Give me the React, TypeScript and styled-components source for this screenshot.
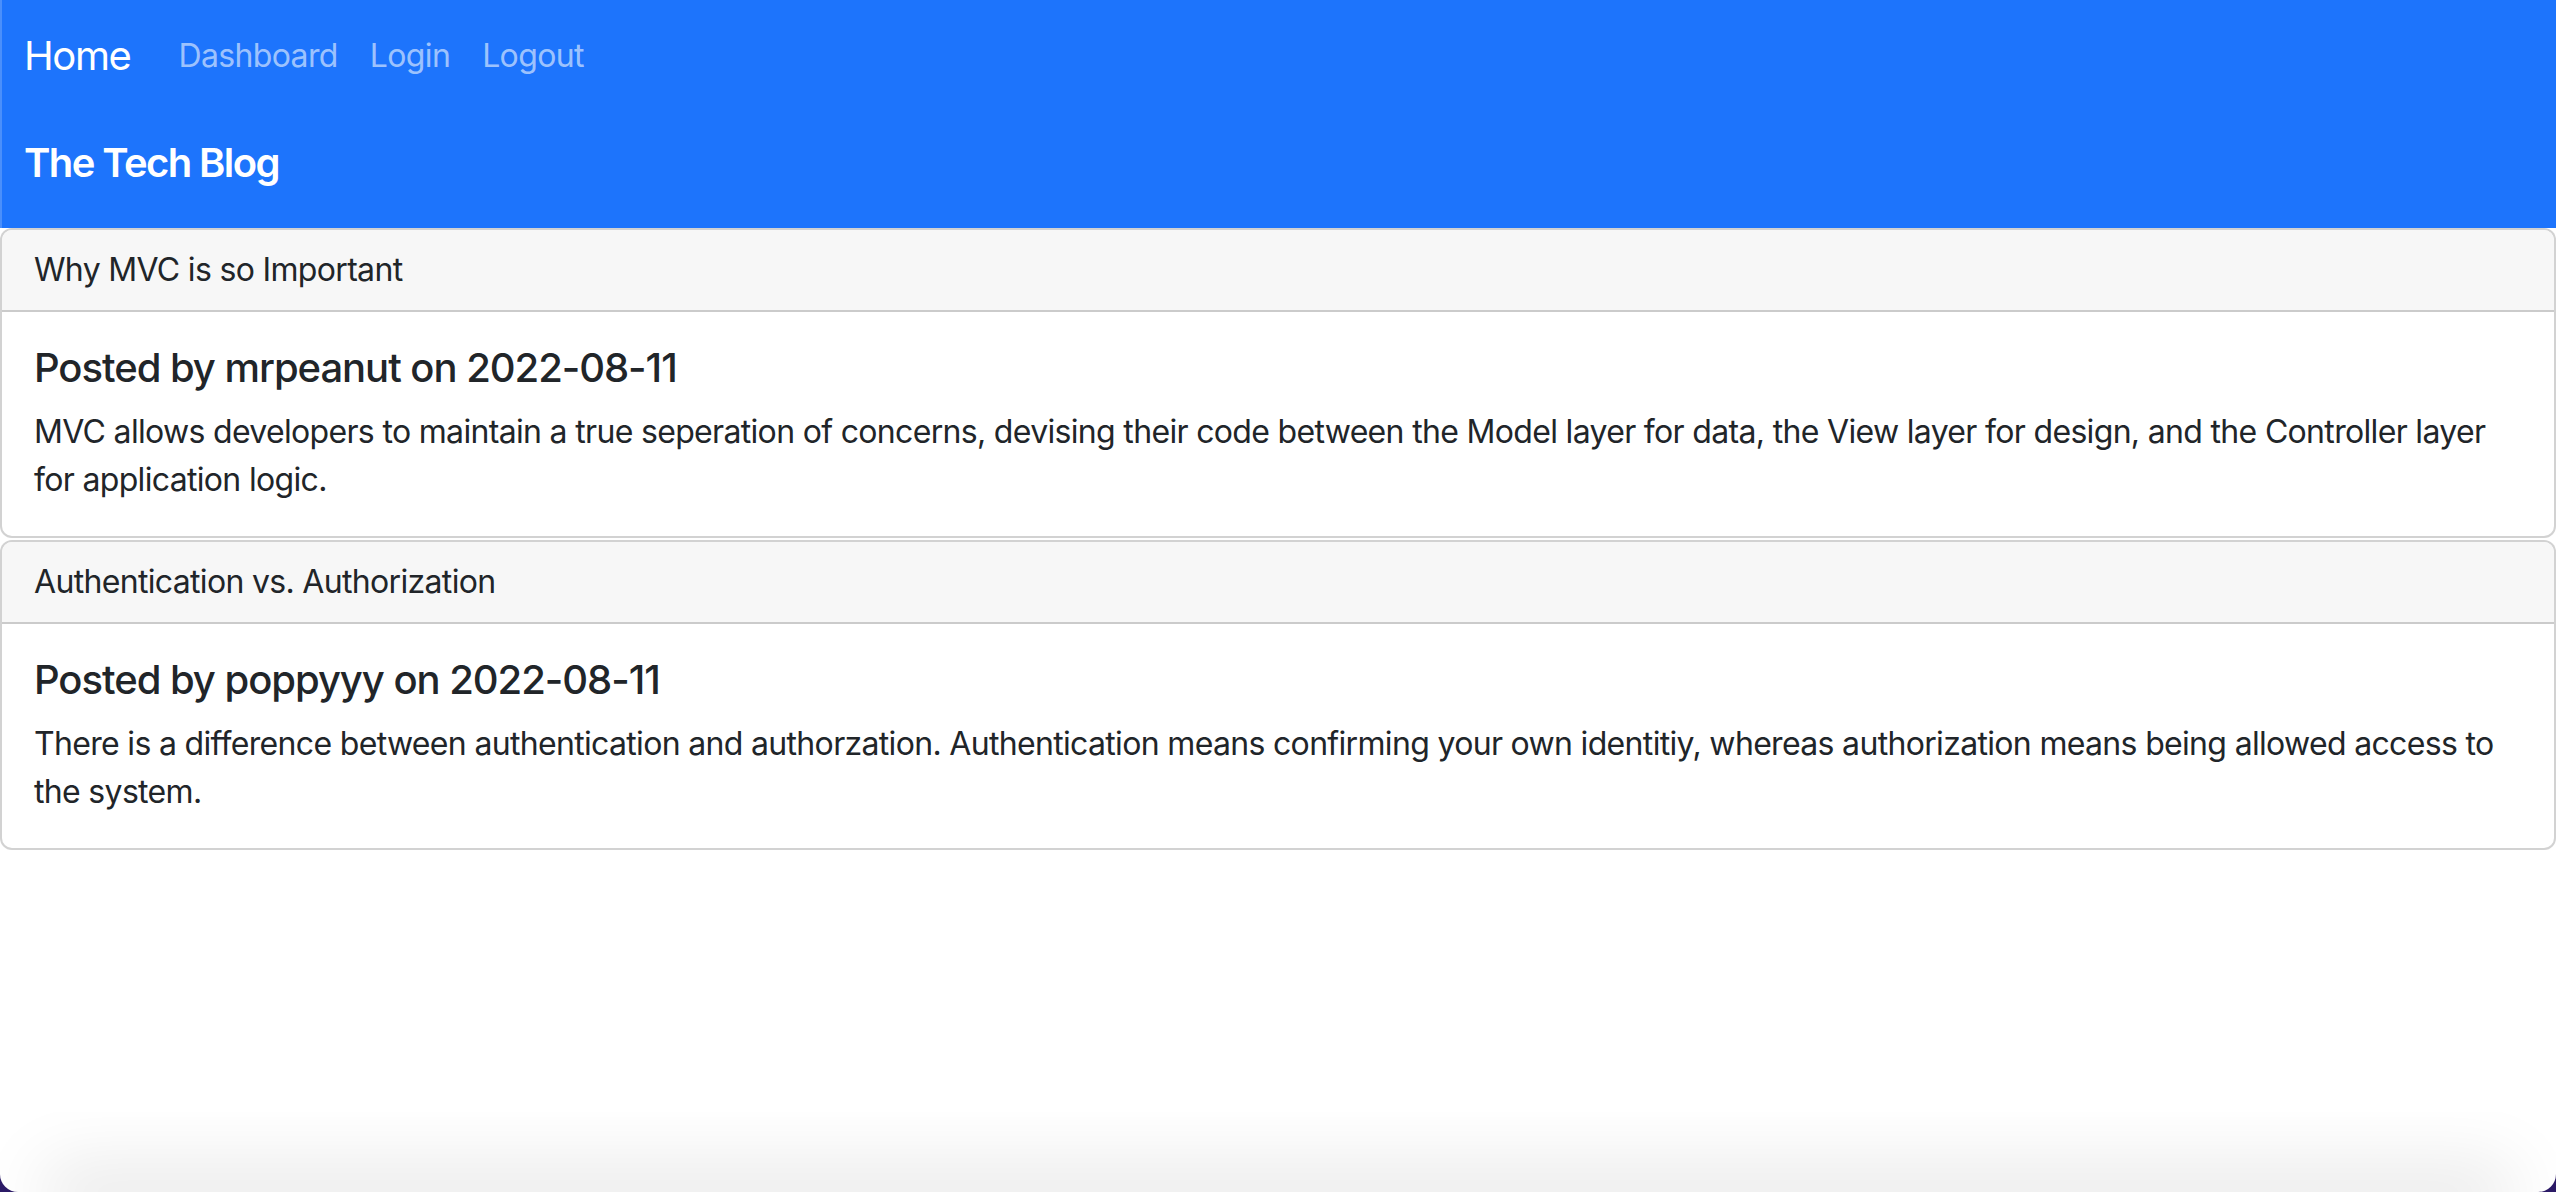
import React from "react";
import styled, { createGlobalStyle } from "styled-components";

const GlobalStyle = createGlobalStyle`
  html, body, #root {
    margin: 0;
    padding: 0;
    height: 100%;
  }
  body {
    background: #2b1a66;
    font-family: Inter, "Noto Sans", "Liberation Sans", sans-serif;
    color: #212529;
    -webkit-font-smoothing: antialiased;
  }
  *, *::before, *::after { box-sizing: border-box; }
`;

const Window = styled.div`
  height: 100vh;
  display: flex;
  flex-direction: column;
  background: #ffffff;
  border-radius: 0 0 18px 18px;
  overflow: hidden;
`;

const Header = styled.header`
  background: #1d74fc;
  box-shadow: inset 2px 0 0 #4a8ffb;
`;

const NavRow = styled.nav`
  display: flex;
  align-items: center;
  padding: 16px 24px;
`;

const Brand = styled.a`
  font-size: 40px;
  line-height: 60px;
  padding: 10px 0;
  margin-right: 32px;
  color: #ffffff;
  text-decoration: none;
  font-weight: 400;
  letter-spacing: -0.035em;
`;

const NavLinks = styled.div`
  display: flex;
`;

const NavLink = styled.a`
  font-size: 32px;
  line-height: 48px;
  padding: 16px;
  color: rgba(255, 255, 255, 0.58);
  text-decoration: none;
  letter-spacing: -0.02em;
`;

const SiteTitle = styled.h1`
  margin: 0;
  padding: 27px 24px 41px;
  font-size: 40px;
  line-height: 48px;
  font-weight: 600;
  color: #ffffff;
  letter-spacing: -0.04em;
`;

const PostList = styled.main`
  display: flex;
  flex-direction: column;
  gap: 2px;
`;

const Card = styled.article`
  border: 2px solid rgba(0, 0, 0, 0.175);
  border-radius: 12px;
  overflow: hidden;
  background: #ffffff;
`;

const CardHeader = styled.div`
  padding: 16px 32px;
  font-size: 32px;
  line-height: 48px;
  background: #f7f7f7;
  border-bottom: 2px solid rgba(0, 0, 0, 0.175);
  letter-spacing: -0.021em;
`;

const CardBody = styled.div`
  padding: 32px;
`;

const PostMeta = styled.h5`
  margin: 0 0 16px;
  font-size: 40px;
  line-height: 48px;
  font-weight: 500;
  letter-spacing: -0.026em;
`;

const PostText = styled.p`
  margin: 0;
  font-size: 32px;
  line-height: 48px;
  letter-spacing: -0.021em;
`;

const Spacer = styled.div`
  flex: 1;
`;

const BottomShade = styled.div`
  height: 80px;
  display: flex;
  align-items: flex-end;
  padding: 0 70px;
  overflow: hidden;
`;

const ShadowCaster = styled.div`
  flex: 1;
  height: 2px;
  margin-bottom: -2px;
  box-shadow: 0 0 70px 26px rgba(0, 0, 0, 0.1);
`;

const posts = [
  {
    title: "Why MVC is so Important",
    author: "mrpeanut",
    date: "2022-08-11",
    body:
      "MVC allows developers to maintain a true seperation of concerns, devising their code between the Model layer for data, the View layer for design, and the Controller layer for application logic.",
  },
  {
    title: "Authentication vs. Authorization",
    author: "poppyyy",
    date: "2022-08-11",
    body:
      "There is a difference between authentication and authorzation. Authentication means confirming your own identitiy, whereas authorization means being allowed access to the system.",
  },
];

export default function App() {
  return (
    <>
      <GlobalStyle />
      <Window>
        <Header>
          <NavRow>
            <Brand href="#">Home</Brand>
            <NavLinks>
              <NavLink href="#">Dashboard</NavLink>
              <NavLink href="#">Login</NavLink>
              <NavLink href="#">Logout</NavLink>
            </NavLinks>
          </NavRow>
          <SiteTitle>The Tech Blog</SiteTitle>
        </Header>
        <PostList>
          {posts.map((p) => (
            <Card key={p.title}>
              <CardHeader>{p.title}</CardHeader>
              <CardBody>
                <PostMeta>
                  Posted by {p.author} on {p.date}
                </PostMeta>
                <PostText>{p.body}</PostText>
              </CardBody>
            </Card>
          ))}
        </PostList>
        <Spacer />
        <BottomShade>
          <ShadowCaster />
        </BottomShade>
      </Window>
    </>
  );
}
